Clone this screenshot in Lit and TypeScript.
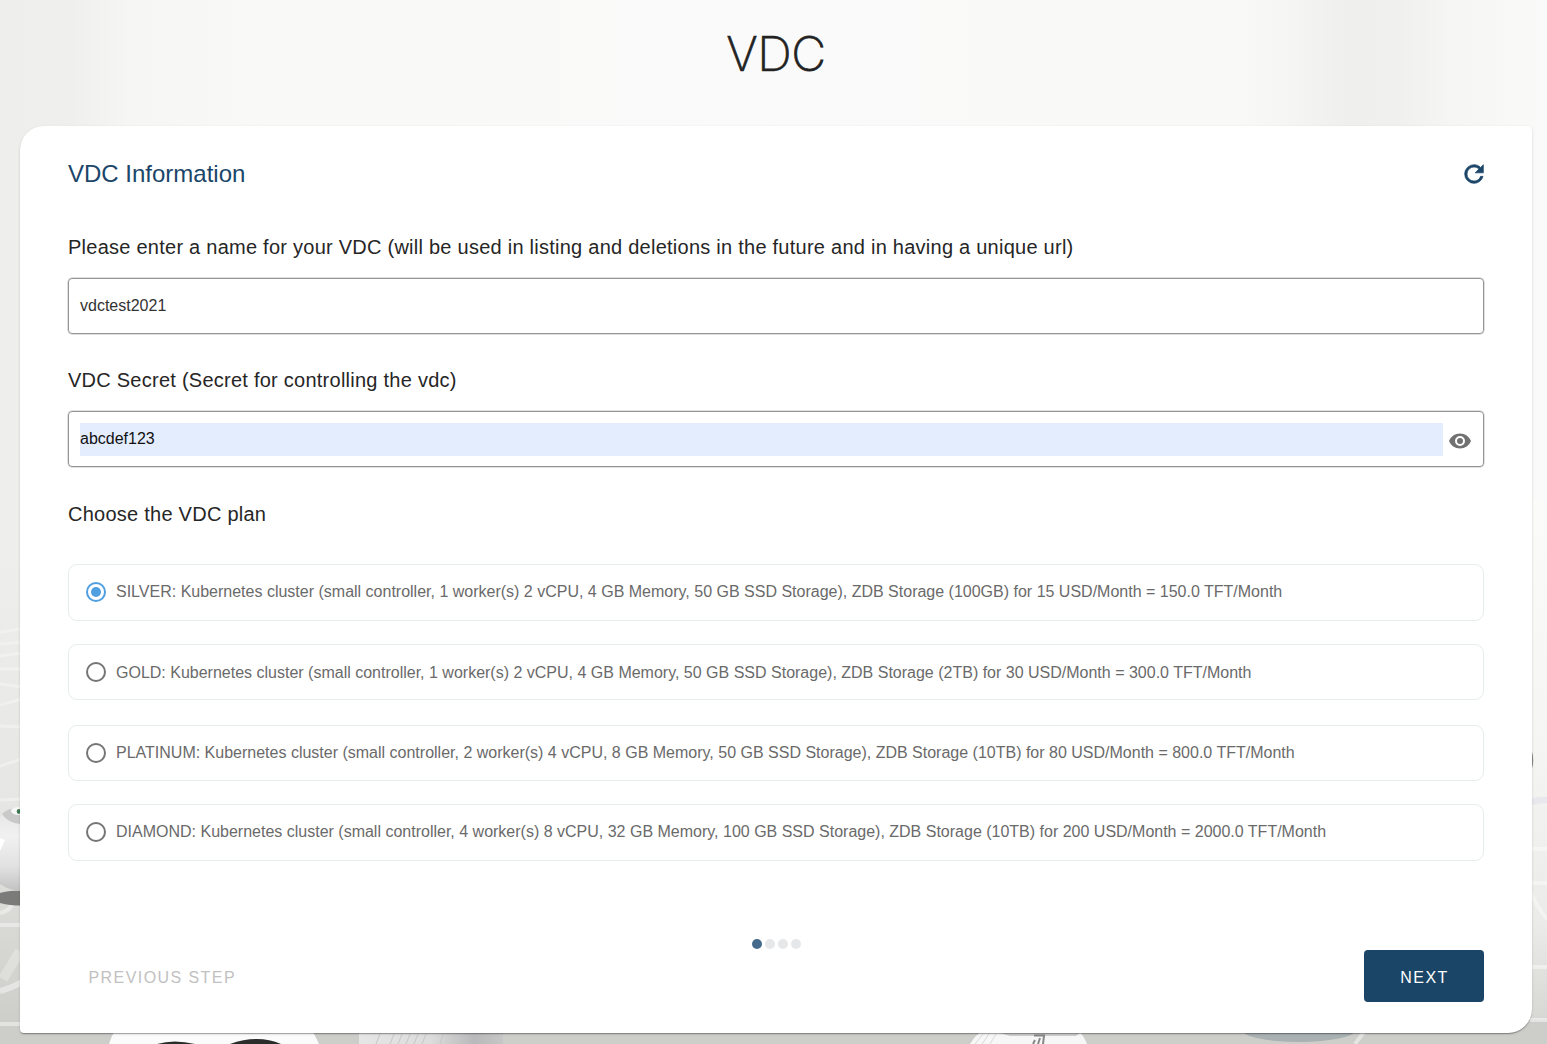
import { LitElement, html, css } from "lit";
import { customElement, property, state } from "lit/decorators.js";

interface Plan {
  name: string;
  detail: string;
}

const PLANS: Plan[] = [
  { name: "SILVER", detail: "Kubernetes cluster (small controller, 1 worker(s) 2 vCPU, 4 GB Memory, 50 GB SSD Storage), ZDB Storage (100GB) for 15 USD/Month = 150.0 TFT/Month" },
  { name: "GOLD", detail: "Kubernetes cluster (small controller, 1 worker(s) 2 vCPU, 4 GB Memory, 50 GB SSD Storage), ZDB Storage (2TB) for 30 USD/Month = 300.0 TFT/Month" },
  { name: "PLATINUM", detail: "Kubernetes cluster (small controller, 2 worker(s) 4 vCPU, 8 GB Memory, 50 GB SSD Storage), ZDB Storage (10TB) for 80 USD/Month = 800.0 TFT/Month" },
  { name: "DIAMOND", detail: "Kubernetes cluster (small controller, 4 worker(s) 8 vCPU, 32 GB Memory, 100 GB SSD Storage), ZDB Storage (10TB) for 200 USD/Month = 2000.0 TFT/Month" },
];

@customElement("page-backdrop")
export class PageBackdrop extends LitElement {
  static styles = css`
    :host { display: block; }
    .scene { display: block; width: 1547px; height: 1044px; }
  `;

  render() {
    return html`
      <svg class="scene" viewBox="0 0 1547 1044" aria-hidden="true">
        <defs>
          <linearGradient id="wall" x1="0" y1="0" x2="1" y2="0">
            <stop offset="0" stop-color="#eeeeec" />
            <stop offset=".045" stop-color="#efefed" />
            <stop offset=".085" stop-color="#f6f6f5" />
            <stop offset=".17" stop-color="#f9f9f8" />
            <stop offset=".5" stop-color="#fafafa" />
            <stop offset=".8" stop-color="#f9f9f8" />
            <stop offset=".835" stop-color="#f5f5f4" />
            <stop offset=".87" stop-color="#efefed" />
            <stop offset=".905" stop-color="#f0f0ef" />
            <stop offset=".935" stop-color="#f5f5f4" />
            <stop offset=".98" stop-color="#f9f9f8" />
            <stop offset="1" stop-color="#fafafa" />
          </linearGradient>
          <linearGradient id="floorLeft" x1="0" y1="0" x2="0" y2="1">
            <stop offset="0" stop-color="#eeeeec" />
            <stop offset=".5" stop-color="#e6e6e4" />
            <stop offset=".8" stop-color="#d6d6d2" />
            <stop offset="1" stop-color="#cbccc8" />
          </linearGradient>
          <linearGradient id="floorRight" x1="0" y1="0" x2="0" y2="1">
            <stop offset="0" stop-color="#fbfbfa" />
            <stop offset=".45" stop-color="#f5f5f4" />
            <stop offset=".78" stop-color="#ebebe9" />
            <stop offset="1" stop-color="#d2d3ce" />
          </linearGradient>
          <linearGradient id="globe" x1="0" y1="0" x2="0" y2="1">
            <stop offset="0" stop-color="#e4e4e4" />
            <stop offset=".35" stop-color="#f1f1f1" />
            <stop offset=".7" stop-color="#e2e2e2" />
            <stop offset="1" stop-color="#c2c2c2" />
          </linearGradient>
          <linearGradient id="cone" x1="0" y1="0" x2="1" y2="0">
            <stop offset="0" stop-color="#e6e6e6" />
            <stop offset=".5" stop-color="#dcdcdc" />
            <stop offset=".8" stop-color="#b9b9bb" />
            <stop offset="1" stop-color="#c6c6c6" />
          </linearGradient>
        </defs>
        <rect width="1547" height="1044" fill="url(#wall)" />
        <rect y="560" width="40" height="484" fill="url(#floorLeft)" />
        <rect x="1500" y="500" width="47" height="544" fill="url(#floorRight)" />
        <rect y="1020" width="1547" height="24" fill="#cdcec9" />

        <g stroke="#f6f6f5" fill="none" stroke-width="3" opacity=".55">
          <path d="M0 632l22-3M0 644l22-2M0 656l22-3M0 669l22 0M0 684l22 3M0 705l22-6M0 726l22 1M0 766l22-7M0 800l22-1" />
          <path d="M0 913q9-2 12-8M0 925h22M0 1024h22" stroke-width="4" />
          <path d="M0 991q12-3 22-9" stroke-width="6" />
          <path d="M3 979l17-28" stroke-width="10" opacity=".6" />
        </g>
        <g stroke="#fcfcfb" fill="none" stroke-width="4" opacity=".5">
          <path d="M1530 849h17M1530 883h17M1530 891q7 16 17 28M1530 967h17M1530 1020h17" />
          <path d="M1355 1044l12-16" />
        </g>
        <path d="M1530 799q8-3 17-2v6q-8 0-17 3z" fill="#e8e8ec" />
        <ellipse cx="1530.500" cy="760" rx="2.700" ry="10" fill="#888" />

        <ellipse cx="22" cy="898" rx="30" ry="7.500" fill="#7b7b7a" />
        <path d="M0 818q7-10 22-11v84q-12 0-22-7z" fill="url(#globe)" />
        <path d="M0 838l5 2-5 11z" fill="#fff" />
        <path d="M2 814q5-6 18-6v16q-12-1-18-10z" fill="#c9c9c9" />
        <ellipse cx="19" cy="811" rx="8" ry="4" fill="#f7f7f7" />
        <ellipse cx="19" cy="811.500" rx="2.300" ry="2.400" fill="#3f7a52" />

        <path d="M109 1044q4-14 14-22h182q8 8 14 22z" fill="#fbfbfb" />
        <path d="M157 1044q17-5 38 0zM230 1044q28-10 51 0z" fill="#2b2c2c" />
        <rect x="359" y="1030" width="144" height="14" fill="url(#cone)" />
        <path d="M376 1044l4-10M390 1044l4-10M398 1044l4-10M406 1044l4-10M414 1044l4-10M422 1044l4-10M440 1044l3-10M458 1044l3-10" stroke="#c6c6c7" />
        <path d="M970 1044q6-10 14-14h94q6 6 9 14z" fill="#f7f7f7" />
        <path d="M1000 1033h80l-4 3h-66z" fill="#bcbcbc" opacity=".7" />
        <path d="M975 1044l8-10M982 1044l7-10M990 1044l6-10" stroke="#d9d9d8" fill="none" />
        <path d="M1033 1044l2-4M1038 1044l2-6M1043 1044l1-8M1034 1035.500h11" stroke="#888" stroke-width="2" fill="none" />
        <ellipse cx="1299" cy="1029" rx="58" ry="13" fill="#a9b1b2" />
      </svg>
    `;
  }
}

@customElement("plan-option")
export class PlanOption extends LitElement {
  @property({ attribute: false }) plan: Plan = PLANS[0];
  @property({ type: Boolean }) selected = false;

  static styles = css`
    :host { display: block; }
    .row {
      box-sizing: border-box;
      height: var(--row-height, 57px);
      display: flex;
      align-items: flex-start;
      gap: 10px;
      padding: 17px 17px 0;
      border: 1px solid #e7ecec;
      border-radius: 9px;
      color: #6a6a6a;
      font-size: 16px;
      line-height: 20px;
      white-space: nowrap;
      cursor: pointer;
    }
    .text { margin-top: var(--text-shift, 0px); }
    .radio {
      box-sizing: border-box;
      flex: none;
      width: 20px;
      height: 20px;
      display: grid;
      place-items: center;
      border: 2px solid #757575;
      border-radius: 50%;
    }
    .radio.on { border-color: #509fe0; }
    .radio.on::after {
      content: "";
      width: 10px;
      height: 10px;
      border-radius: 50%;
      background: #509fe0;
    }
  `;

  render() {
    return html`
      <div class="row" role="radio" aria-checked=${this.selected}>
        <span class="radio ${this.selected ? "on" : ""}"></span>
        <span class="text">${this.plan.name}: ${this.plan.detail}</span>
      </div>
    `;
  }
}

@customElement("app-root")
export class AppRoot extends LitElement {
  @state() private chosen = 0;

  static styles = css`
    :host {
      display: block;
      position: relative;
      height: 1044px;
      overflow: hidden;
      font-family: "Liberation Sans", Arial, sans-serif;
      color: #262626;
    }
    .backdrop { position: absolute; inset: 0; }
    .page {
      position: relative;
      box-sizing: border-box;
      height: 1044px;
      padding: 0 15px 11px 20px;
      display: flex;
      flex-direction: column;
    }
    .title {
      flex: none;
      height: 126px;
      margin: 0;
      box-sizing: border-box;
      padding-top: 24px;
      text-align: center;
      font: 200 48px/60px Inter, Roboto, sans-serif;
      letter-spacing: -0.4px;
      color: #222;
      -webkit-text-stroke: 0.7px #222;
    }
    .card {
      flex: 1;
      display: flex;
      flex-direction: column;
      box-sizing: border-box;
      padding: 33px 48px 31px;
      background: #fff;
      border-radius: 24px 4px 24px 4px;
      box-shadow: 0 2px 1px -1px rgba(0, 0, 0, 0.2), 0 1px 1px rgba(0, 0, 0, 0.14), 0 1px 3px rgba(0, 0, 0, 0.12);
    }
    .head {
      display: flex;
      justify-content: space-between;
      align-items: center;
      height: 30px;
      margin-bottom: 44px;
    }
    .head h2 {
      margin: 0;
      font-size: 24px;
      line-height: 30px;
      font-weight: 400;
      color: #1b4669;
    }
    .refresh { width: 28px; height: 28px; margin: 0 -4px 1px 0; fill: #1b4669; stroke: #1b4669; stroke-width: 0.6; }
    .label { font-size: 20px; line-height: 28px; letter-spacing: 0.25px; }
    .plan-label { padding-top: 1px; }
    .field {
      box-sizing: border-box;
      height: 56px;
      display: flex;
      align-items: center;
      gap: 5px;
      margin: 17px 0 32px;
      padding: 0 11px;
      border: 1px solid #959595;
      border-radius: 4px;
      box-shadow: 0 0 0 0.5px #c4c4c4;
      font-size: 16px;
    }
    .value { flex: 1; line-height: 31px; padding-bottom: 2px; color: #333; }
    .value.filled { background: #e4edfe; color: #111; }
    .eye { width: 24px; height: 24px; fill: #717171; margin-top: 3px; }
    .plans { margin-top: 36px; display: flex; flex-direction: column; gap: 23px; }
    .plans plan-option:nth-child(2) { --row-height: 56px; --text-shift: 1px; }
    .plans plan-option:nth-child(3) { --row-height: 56px; margin-top: 2px; }
    .steps { display: flex; justify-content: center; gap: 3px; margin: auto 0 1px; }
    .step { width: 10px; height: 10px; border-radius: 50%; background: #e5e7e9; }
    .step.on { background: #456a8b; }
    .actions { display: flex; justify-content: space-between; align-items: center; }
    .btn {
      font: 400 16px/20px "Liberation Sans", Arial, sans-serif;
      letter-spacing: 1.43px;
      border: 0;
      padding: 0;
      height: 52px;
      background: none;
    }
    .prev { color: #c1c1c1; padding-left: 20.5px; padding-top: 3px; }
    .next {
      width: 120px;
      padding-top: 3px;
      padding-left: 1px;
      background: #1b4566;
      color: #fff;
      border-radius: 4px;
    }
  `;

  render() {
    return html`
      <page-backdrop class="backdrop"></page-backdrop>
      <div class="page">
        <h1 class="title">VDC</h1>
        <section class="card">
          <header class="head">
            <h2>VDC Information</h2>
            <svg class="refresh" viewBox="0 0 24 24" aria-label="Refresh">
              <path d="M17.65 6.35C16.2 4.9 14.21 4 12 4a8 8 0 0 0-8 8 8 8 0 0 0 8 8c3.73 0 6.84-2.55 7.73-6h-2.08A5.99 5.99 0 0 1 12 18a6 6 0 0 1-6-6 6 6 0 0 1 6-6c1.66 0 3.14.69 4.22 1.78L13 11h7V4l-2.35 2.35z" />
            </svg>
          </header>

          <div class="label">Please enter a name for your VDC (will be used in listing and deletions in the future and in having a unique url)</div>
          <div class="field"><span class="value">vdctest2021</span></div>

          <div class="label">VDC Secret (Secret for controlling the vdc)</div>
          <div class="field">
            <span class="value filled">abcdef123</span>
            <svg class="eye" viewBox="0 0 24 24" aria-label="Show secret">
              <path d="M12 9a3 3 0 0 0-3 3 3 3 0 0 0 3 3 3 3 0 0 0 3-3 3 3 0 0 0-3-3m0 8a5 5 0 0 1-5-5 5 5 0 0 1 5-5 5 5 0 0 1 5 5 5 5 0 0 1-5 5m0-12.500C7 4.500 2.730 7.610 1 12c1.730 4.390 6 7.500 11 7.500s9.270-3.110 11-7.500c-1.730-4.390-6-7.500-11-7.500z" />
            </svg>
          </div>

          <div class="label plan-label">Choose the VDC plan</div>
          <div class="plans" role="radiogroup">
            ${PLANS.map(
              (plan, i) => html`
                <plan-option .plan=${plan} ?selected=${i === this.chosen} @click=${() => (this.chosen = i)}></plan-option>
              `,
            )}
          </div>

          <div class="steps">
            ${[0, 1, 2, 3].map((i) => html`<span class="step ${i === 0 ? "on" : ""}"></span>`)}
          </div>
          <div class="actions">
            <button class="btn prev" disabled>PREVIOUS STEP</button>
            <button class="btn next">NEXT</button>
          </div>
        </section>
      </div>
    `;
  }
}
